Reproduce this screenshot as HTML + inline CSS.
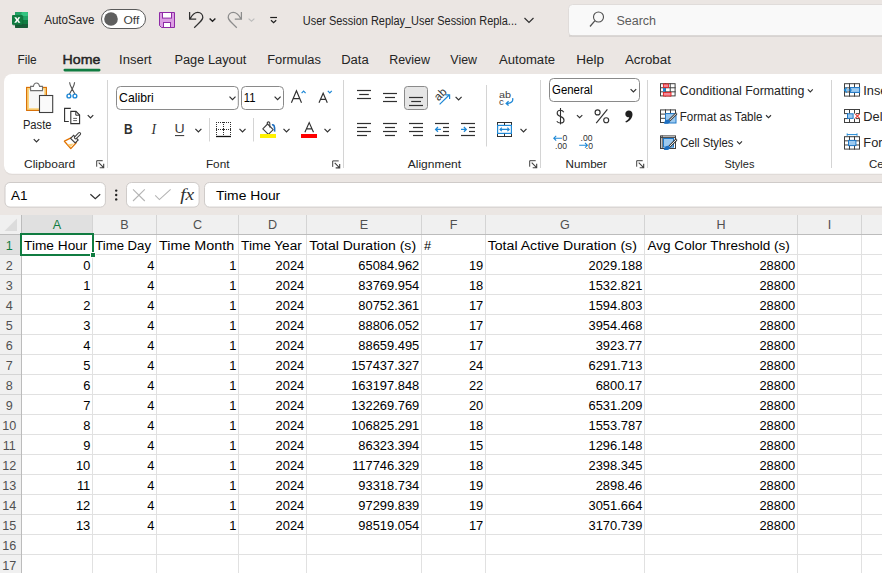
<!DOCTYPE html>
<html><head><meta charset="utf-8"><title>Excel</title>
<style>html,body{margin:0;padding:0;width:882px;height:573px;overflow:hidden;background:#ebe6e3}
svg{display:block} text{font-family:"Liberation Sans",sans-serif}</style></head>
<body><svg width="882" height="573" viewBox="0 0 882 573" shape-rendering="auto">
<rect x="0" y="0" width="882" height="573" rx="0" fill="#ebe6e3" />
<g>
<rect x="15" y="12" width="13" height="16" rx="1.2" fill="#185c37" />
<rect x="15" y="12" width="13" height="4.2" rx="1.2" fill="#21a366" />
<rect x="21.5" y="12" width="6.5" height="4.2" rx="1.2" fill="#33c481" />
<rect x="15" y="16" width="13" height="4" rx="0" fill="#21a366" />
<rect x="15" y="20" width="13" height="4" rx="0" fill="#107c41" />
<rect x="15" y="24" width="13" height="4" rx="1.2" fill="#185c37" />
<rect x="12.6" y="15.6" width="10.6" height="10" rx="1" fill="#0b4a26" opacity="0.5"/>
<rect x="12" y="15" width="10.6" height="9.8" rx="1" fill="#107c41" />
<path d="M14.3 17.2 L16.3 17.2 L17.3 19.1 L18.3 17.2 L20.3 17.2 L18.4 20 L20.4 22.8 L18.3 22.8 L17.3 20.9 L16.3 22.8 L14.2 22.8 L16.2 20 Z" fill="#fff" />
</g>
<text x="44.18" y="24" font-size="12.50" fill="#242424" textLength="50.24" lengthAdjust="spacingAndGlyphs">AutoSave</text>
<rect x="101.5" y="9.5" width="44" height="19" rx="9.5" fill="#fff" stroke="#5a5a5a" stroke-width="1" />
<circle cx="111" cy="19" r="6.8" fill="#5f5f5f"/>
<text x="123.44" y="23.8" font-size="11.05" fill="#3c3c3c" textLength="15.85" lengthAdjust="spacingAndGlyphs">Off</text>
<path d="M159.5 12.5 H174.5 V27.5 H161.5 L159.5 25.5 Z" fill="#dc9ee3" stroke="#8e2aa6" stroke-width="1" />
<rect x="162.5" y="12.5" width="9" height="5.6" rx="0" fill="#fff" stroke="#8e2aa6" stroke-width="1" />
<rect x="163.5" y="22.5" width="7" height="5" rx="0" fill="#fff" stroke="#8e2aa6" stroke-width="1" />
<path d="M189.6 12 V19 H196.2 M190.2 18.6 C192.5 14.2 195 12.4 197.8 12.4 C200.8 12.4 202.8 14.8 202.8 17.6 C202.8 19.6 201.5 21 194.2 27.8" fill="none" stroke="#303030" stroke-width="1.25" stroke-linejoin="miter"/>
<path d="M209.6 18.6 L212.5 21.2 L215.4 18.6" fill="none" stroke="#202020" stroke-width="1.4" />
<path d="M241.4 12 V19 H234.8 M240.8 18.6 C238.5 14.2 236 12.4 233.2 12.4 C230.2 12.4 228.2 14.8 228.2 17.6 C228.2 19.6 229.5 21 236.8 27.8" fill="none" stroke="#8c8c8c" stroke-width="1.25" />
<path d="M248.6 18.6 L251.5 21.2 L254.4 18.6" fill="none" stroke="#bdbdbd" stroke-width="1.2" />
<line x1="270.2" y1="17.5" x2="277" y2="17.5" stroke="#202020" stroke-width="1.2" />
<path d="M271 20.2 L273.6 22.7 L276.2 20.2" fill="none" stroke="#202020" stroke-width="1.2" />
<text x="302.76" y="25" font-size="13.08" fill="#242424" textLength="214.24" lengthAdjust="spacingAndGlyphs">User Session Replay_User Session Repla...</text>
<path d="M524.5 18 L529 22.5 L533.5 18" fill="none" stroke="#303030" stroke-width="1.2" />
<rect x="568.5" y="4.5" width="400" height="31.5" rx="4" fill="#f9f9f9" stroke="#e0dcda" stroke-width="1" />
<line x1="569" y1="36" x2="882" y2="36" stroke="#c9c5c3" stroke-width="1" />
<circle cx="598.5" cy="17" r="5" fill="none" stroke="#505050" stroke-width="1.1"/>
<line x1="594.8" y1="20.8" x2="590" y2="26.5" stroke="#505050" stroke-width="1.2" />
<text x="616.43" y="25" font-size="13.08" fill="#5c5c5c" textLength="39.58" lengthAdjust="spacingAndGlyphs">Search</text>
<text x="17.52" y="63.7" font-size="13.08" fill="#242424" textLength="19.21" lengthAdjust="spacingAndGlyphs">File</text>
<text x="62.54" y="63.7" font-size="13.08" fill="#242424" stroke="#242424" stroke-width="0.45" textLength="37.79" lengthAdjust="spacingAndGlyphs">Home</text>
<text x="119.10" y="63.7" font-size="13.08" fill="#242424" textLength="32.60" lengthAdjust="spacingAndGlyphs">Insert</text>
<text x="174.45" y="63.7" font-size="13.08" fill="#242424" textLength="71.94" lengthAdjust="spacingAndGlyphs">Page Layout</text>
<text x="267.24" y="63.7" font-size="13.08" fill="#242424" textLength="53.72" lengthAdjust="spacingAndGlyphs">Formulas</text>
<text x="341.23" y="63.7" font-size="13.08" fill="#242424" textLength="27.47" lengthAdjust="spacingAndGlyphs">Data</text>
<text x="389.18" y="63.7" font-size="13.08" fill="#242424" textLength="40.79" lengthAdjust="spacingAndGlyphs">Review</text>
<text x="450.35" y="63.7" font-size="13.08" fill="#242424" textLength="26.62" lengthAdjust="spacingAndGlyphs">View</text>
<text x="498.97" y="63.7" font-size="13.08" fill="#242424" textLength="56.11" lengthAdjust="spacingAndGlyphs">Automate</text>
<text x="576.19" y="63.7" font-size="13.08" fill="#242424" textLength="27.88" lengthAdjust="spacingAndGlyphs">Help</text>
<text x="624.97" y="63.7" font-size="13.08" fill="#242424" textLength="45.92" lengthAdjust="spacingAndGlyphs">Acrobat</text>
<rect x="63.5" y="68.8" width="37" height="2.6" rx="1.3" fill="#107c41" />
<rect x="4" y="75" width="890" height="100" rx="8" fill="#d8d3d0" opacity="0.6"/>
<rect x="4" y="74" width="890" height="99.8" rx="8" fill="#ffffff" />
<rect x="26.6" y="87.4" width="19.8" height="23" rx="0" fill="#fbd47c" stroke="#d86c00" stroke-width="1.1" />
<rect x="29" y="89.6" width="15.2" height="18.6" rx="0" fill="#f7f7f7" />
<path d="M30.6 90.6 V86.4 H33.4 C33.8 84 35 83 36.5 83 C38 83 39.2 84 39.6 86.4 H42.5 V90.6 Z" fill="#ffffff" stroke="#707070" stroke-width="1.1" />
<rect x="39.5" y="95.5" width="13.2" height="17" rx="0" fill="#fafafa" stroke="#404040" stroke-width="1.1" />
<text x="22.88" y="128.8" font-size="12.50" fill="#242424" textLength="28.62" lengthAdjust="spacingAndGlyphs">Paste</text>
<path d="M33.75 139.125 L36.5 141.875 L39.25 139.125" fill="none" stroke="#303030" stroke-width="1.2" />
<path d="M69.6 82.2 C69.8 85 71.5 87.5 72.2 89 L69.4 94.2 M74.6 82.2 C74.4 85 72.8 87.5 72.2 89 L75 94.2" fill="none" stroke="#505050" stroke-width="1.1" />
<circle cx="68.9" cy="96" r="1.9" fill="none" stroke="#1e88d6" stroke-width="1.4"/>
<circle cx="74.9" cy="96" r="1.9" fill="none" stroke="#1e88d6" stroke-width="1.4"/>
<path d="M68.8 121.5 H64.6 V108.4 H70.8" fill="none" stroke="#303030" stroke-width="1.1" />
<path d="M70.8 123.6 V111.4 H76 L79.6 115 V123.6 Z" fill="#ffffff" stroke="#303030" stroke-width="1.1" />
<path d="M75.8 111.4 V115.2 H79.6" fill="none" stroke="#303030" stroke-width="1" />
<line x1="73.2" y1="118.4" x2="77" y2="118.4" stroke="#505050" stroke-width="0.9" />
<line x1="73.2" y1="120.6" x2="77" y2="120.6" stroke="#505050" stroke-width="0.9" />
<path d="M87.75 115.125 L90.5 117.875 L93.25 115.125" fill="none" stroke="#303030" stroke-width="1.2" />
<path d="M64.4 141.2 L71.4 137.6 L76.2 142.8 L70.8 148.6 Z" fill="#ffffff" stroke="#e27300" stroke-width="1.3" stroke-linejoin="round"/>
<path d="M67.2 144.2 L73.8 143.6 L70.8 147 Z" fill="#fbd07a" />
<path d="M70.6 138.4 L73.6 135.4 L78.2 140 L75.2 143 Z" fill="#ffffff" stroke="#404040" stroke-width="1.1" />
<line x1="75.6" y1="137.6" x2="79.4" y2="133.8" stroke="#404040" stroke-width="3.4" stroke-linecap="round"/>
<line x1="75.6" y1="137.6" x2="79.4" y2="133.8" stroke="#ffffff" stroke-width="1.3" stroke-linecap="round"/>
<text x="23.99" y="167.7" font-size="11.48" fill="#242424" textLength="51.28" lengthAdjust="spacingAndGlyphs">Clipboard</text>
<path d="M96.7 166.7 V160.7 H102.7" fill="none" stroke="#404040" stroke-width="1" />
<path d="M98.7 162.7 L103.4 167.39999999999998 M103.7 163.7 V167.7 H99.7" fill="none" stroke="#404040" stroke-width="1.1" />
<line x1="107.5" y1="80" x2="107.5" y2="168" stroke="#d4d4d4" stroke-width="1" />
<rect x="116.5" y="86.5" width="121.8" height="23" rx="4" fill="#fff" stroke="#8a8a8a" stroke-width="1" />
<text x="119.08" y="102.2" font-size="12.94" fill="#000" textLength="34.64" lengthAdjust="spacingAndGlyphs">Calibri</text>
<path d="M229.5 96.7 L232.5 99.7 L235.5 96.7" fill="none" stroke="#303030" stroke-width="1.2" />
<rect x="241.5" y="86.5" width="42" height="23" rx="4" fill="#fff" stroke="#8a8a8a" stroke-width="1" />
<text x="243.80" y="102" font-size="12.21" fill="#000" textLength="11.72" lengthAdjust="spacingAndGlyphs">11</text>
<path d="M274.6 96.7 L277.6 99.7 L280.6 96.7" fill="none" stroke="#303030" stroke-width="1.2" />
<path d="M291.4 102.8 L296.45 90.8 L301.5 102.8 M293.1 98.6 H299.8" fill="none" stroke="#303030" stroke-width="1.15" />
<path d="M301.6 93.2 L303.6 91.2 L305.6 93.2" fill="none" stroke="#1e88d6" stroke-width="1.2" />
<path d="M319 102.8 L323.15 93.2 L327.3 102.8 M320.5 99.4 H325.8" fill="none" stroke="#303030" stroke-width="1.15" />
<path d="M327.8 90.8 L329.8 92.8 L331.8 90.8" fill="none" stroke="#1e88d6" stroke-width="1.2" />
<text x="123.90" y="133.8" font-size="13.81" fill="#303030" font-weight="bold" textLength="8.64" lengthAdjust="spacingAndGlyphs">B</text>
<text x="151.6" y="133.8" font-size="13.6" fill="#303030" font-style="italic" style="font-family:Liberation Serif">I</text>
<text x="174.41" y="133.2" font-size="13.08" fill="#404040" textLength="10.17" lengthAdjust="spacingAndGlyphs">U</text>
<line x1="175" y1="135.6" x2="184.2" y2="135.6" stroke="#303030" stroke-width="1" />
<path d="M195.4 128.9 L198.4 131.9 L201.4 128.9" fill="none" stroke="#303030" stroke-width="1.2" />
<line x1="209.5" y1="118" x2="209.5" y2="141.5" stroke="#d4d4d4" stroke-width="1" />
<g fill="#303030"><rect x="216" y="122" width="1" height="1"/><rect x="216" y="129" width="1" height="1"/><rect x="218" y="122" width="1" height="1"/><rect x="218" y="129" width="1" height="1"/><rect x="220" y="122" width="1" height="1"/><rect x="220" y="129" width="1" height="1"/><rect x="222" y="122" width="1" height="1"/><rect x="222" y="129" width="1" height="1"/><rect x="224" y="122" width="1" height="1"/><rect x="224" y="129" width="1" height="1"/><rect x="226" y="122" width="1" height="1"/><rect x="226" y="129" width="1" height="1"/><rect x="228" y="122" width="1" height="1"/><rect x="228" y="129" width="1" height="1"/><rect x="230" y="122" width="1" height="1"/><rect x="230" y="129" width="1" height="1"/><rect x="216" y="124" width="1" height="1"/><rect x="230" y="124" width="1" height="1"/><rect x="223" y="124" width="1" height="1"/><rect x="216" y="126" width="1" height="1"/><rect x="230" y="126" width="1" height="1"/><rect x="223" y="126" width="1" height="1"/><rect x="216" y="128" width="1" height="1"/><rect x="230" y="128" width="1" height="1"/><rect x="223" y="128" width="1" height="1"/><rect x="216" y="130" width="1" height="1"/><rect x="230" y="130" width="1" height="1"/><rect x="223" y="130" width="1" height="1"/><rect x="216" y="132" width="1" height="1"/><rect x="230" y="132" width="1" height="1"/><rect x="223" y="132" width="1" height="1"/><rect x="216" y="134" width="1" height="1"/><rect x="230" y="134" width="1" height="1"/><rect x="223" y="134" width="1" height="1"/><rect x="223" y="122" width="1" height="1"/><rect x="223" y="129" width="1" height="1"/></g>
<line x1="216" y1="136.5" x2="231" y2="136.5" stroke="#101010" stroke-width="1.3" />
<path d="M239.5 128.9 L242.5 131.9 L245.5 128.9" fill="none" stroke="#303030" stroke-width="1.2" />
<line x1="253.5" y1="118" x2="253.5" y2="141.5" stroke="#d4d4d4" stroke-width="1" />
<path d="M262.8 128.8 L267.6 124 L273.2 129.6 L268.4 134.4 Z" fill="#ffffff" stroke="#404040" stroke-width="1.1" stroke-linejoin="round"/>
<path d="M267.4 124.4 C266.6 121.6 269.8 120.8 269.8 123.6 V127.6" fill="none" stroke="#404040" stroke-width="1.1" />
<path d="M272 125 C274 124.2 275 126.6 274.6 131.6" fill="none" stroke="#1e6fc0" stroke-width="1.6" />
<rect x="260" y="134" width="16" height="4" rx="0" fill="#fff100" />
<path d="M283.5 128.9 L286.5 131.9 L289.5 128.9" fill="none" stroke="#303030" stroke-width="1.2" />
<path d="M304.9 132.2 L309.2 122.6 L313.5 132.2 M306.4 128.8 H312" fill="none" stroke="#303030" stroke-width="1.15" />
<rect x="301" y="134" width="16" height="4" rx="0" fill="#ff0000" />
<path d="M324.5 128.9 L327.5 131.9 L330.5 128.9" fill="none" stroke="#303030" stroke-width="1.2" />
<text x="205.93" y="167.8" font-size="11.48" fill="#242424" textLength="23.55" lengthAdjust="spacingAndGlyphs">Font</text>
<path d="M332.7 166.9 V160.9 H338.7" fill="none" stroke="#404040" stroke-width="1" />
<path d="M334.7 162.9 L339.4 167.6 M339.7 163.9 V167.9 H335.7" fill="none" stroke="#404040" stroke-width="1.1" />
<line x1="343.5" y1="80" x2="343.5" y2="168" stroke="#d4d4d4" stroke-width="1" />
<line x1="357" y1="90.5" x2="371" y2="90.5" stroke="#303030" stroke-width="1.2" stroke-linecap="butt"/>
<line x1="359.2" y1="94.5" x2="368.8" y2="94.5" stroke="#303030" stroke-width="1.2" stroke-linecap="butt"/>
<line x1="357" y1="98.5" x2="371" y2="98.5" stroke="#303030" stroke-width="1.2" stroke-linecap="butt"/>
<line x1="383" y1="93.5" x2="397" y2="93.5" stroke="#303030" stroke-width="1.2" stroke-linecap="butt"/>
<line x1="385" y1="97.5" x2="395" y2="97.5" stroke="#303030" stroke-width="1.2" stroke-linecap="butt"/>
<line x1="383" y1="101.5" x2="397" y2="101.5" stroke="#303030" stroke-width="1.2" stroke-linecap="butt"/>
<rect x="404.5" y="86.5" width="23" height="23" rx="3" fill="#e6e6e6" stroke="#8a8a8a" stroke-width="1" />
<line x1="409" y1="97.5" x2="423" y2="97.5" stroke="#303030" stroke-width="1.2" stroke-linecap="butt"/>
<line x1="411.2" y1="101.5" x2="421" y2="101.5" stroke="#303030" stroke-width="1.2" stroke-linecap="butt"/>
<line x1="409" y1="105.5" x2="423" y2="105.5" stroke="#303030" stroke-width="1.2" stroke-linecap="butt"/>
<text x="0" y="0" font-size="11.4" fill="#303030" transform="translate(438.4 101.6) rotate(-45)">ab</text>
<line x1="439.6" y1="104.4" x2="449.2" y2="95" stroke="#1e88d6" stroke-width="1.2" />
<path d="M445.4 94.8 H449.6 V99" fill="none" stroke="#1e88d6" stroke-width="1.2" />
<path d="M455.6 96.9 L458.6 99.9 L461.6 96.9" fill="none" stroke="#303030" stroke-width="1.2" />
<line x1="357" y1="123.5" x2="371" y2="123.5" stroke="#303030" stroke-width="1.2" stroke-linecap="butt"/>
<line x1="383" y1="123.5" x2="397" y2="123.5" stroke="#303030" stroke-width="1.2" stroke-linecap="butt"/>
<line x1="409" y1="123.5" x2="423" y2="123.5" stroke="#303030" stroke-width="1.2" stroke-linecap="butt"/>
<line x1="357" y1="127.5" x2="367" y2="127.5" stroke="#303030" stroke-width="1.2" stroke-linecap="butt"/>
<line x1="385" y1="127.5" x2="395" y2="127.5" stroke="#303030" stroke-width="1.2" stroke-linecap="butt"/>
<line x1="413" y1="127.5" x2="423" y2="127.5" stroke="#303030" stroke-width="1.2" stroke-linecap="butt"/>
<line x1="357" y1="131.5" x2="371" y2="131.5" stroke="#303030" stroke-width="1.2" stroke-linecap="butt"/>
<line x1="383" y1="131.5" x2="397" y2="131.5" stroke="#303030" stroke-width="1.2" stroke-linecap="butt"/>
<line x1="409" y1="131.5" x2="423" y2="131.5" stroke="#303030" stroke-width="1.2" stroke-linecap="butt"/>
<line x1="357" y1="135.5" x2="367" y2="135.5" stroke="#303030" stroke-width="1.2" stroke-linecap="butt"/>
<line x1="385" y1="135.5" x2="395" y2="135.5" stroke="#303030" stroke-width="1.2" stroke-linecap="butt"/>
<line x1="413" y1="135.5" x2="423" y2="135.5" stroke="#303030" stroke-width="1.2" stroke-linecap="butt"/>
<line x1="435" y1="123.5" x2="449" y2="123.5" stroke="#303030" stroke-width="1.2" stroke-linecap="butt"/>
<line x1="461" y1="123.5" x2="475" y2="123.5" stroke="#303030" stroke-width="1.2" stroke-linecap="butt"/>
<line x1="435" y1="135.5" x2="449" y2="135.5" stroke="#303030" stroke-width="1.2" stroke-linecap="butt"/>
<line x1="461" y1="135.5" x2="475" y2="135.5" stroke="#303030" stroke-width="1.2" stroke-linecap="butt"/>
<line x1="443" y1="127.5" x2="449" y2="127.5" stroke="#303030" stroke-width="1.2" stroke-linecap="butt"/>
<line x1="469" y1="127.5" x2="475" y2="127.5" stroke="#303030" stroke-width="1.2" stroke-linecap="butt"/>
<line x1="443" y1="131.5" x2="449" y2="131.5" stroke="#303030" stroke-width="1.2" stroke-linecap="butt"/>
<line x1="469" y1="131.5" x2="475" y2="131.5" stroke="#303030" stroke-width="1.2" stroke-linecap="butt"/>
<path d="M440.9 129.4 H435.6 M438 127 L435.6 129.4 L438 131.8" fill="none" stroke="#1e88d6" stroke-width="1.3" />
<path d="M461 129.4 H466.3 M463.9 127 L466.3 129.4 L463.9 131.8" fill="none" stroke="#1e88d6" stroke-width="1.3" />
<line x1="486.5" y1="85" x2="486.5" y2="146.5" stroke="#d4d4d4" stroke-width="1" />
<text x="499" y="97.6" font-size="9.6" fill="#404040" textLength="12" lengthAdjust="spacingAndGlyphs">ab</text>
<text x="499" y="104.8" font-size="9.6" fill="#404040">c</text>
<path d="M512.6 98.2 C513.4 101.2 511.2 103.4 506.4 103.4 M508.6 101.2 L506.2 103.4 L508.6 105.6" fill="none" stroke="#1e88d6" stroke-width="1.3" />
<rect x="497.5" y="122.5" width="14" height="14" rx="0" fill="#ffffff" stroke="#303030" stroke-width="1" />
<rect x="497.6" y="125.4" width="13.8" height="8" rx="0" fill="#ffffff" stroke="#1e88d6" stroke-width="1.2" />
<line x1="504.5" y1="122.5" x2="504.5" y2="125" stroke="#303030" stroke-width="1" />
<line x1="504.5" y1="133.8" x2="504.5" y2="136.5" stroke="#303030" stroke-width="1" />
<path d="M500 129.4 H509.2 M501.8 127.6 L500 129.4 L501.8 131.2 M507.4 127.6 L509.2 129.4 L507.4 131.2" fill="none" stroke="#1e88d6" stroke-width="1.1" />
<path d="M520.5 128.9 L523.5 131.9 L526.5 128.9" fill="none" stroke="#303030" stroke-width="1.2" />
<text x="407.78" y="167.8" font-size="11.48" fill="#242424" textLength="53.31" lengthAdjust="spacingAndGlyphs">Alignment</text>
<path d="M529.7 166.7 V160.7 H535.7" fill="none" stroke="#404040" stroke-width="1" />
<path d="M531.7 162.7 L536.4000000000001 167.39999999999998 M536.7 163.7 V167.7 H532.7" fill="none" stroke="#404040" stroke-width="1.1" />
<line x1="540.5" y1="80" x2="540.5" y2="168" stroke="#d4d4d4" stroke-width="1" />
<rect x="549.5" y="78.5" width="90" height="23" rx="4" fill="#fff" stroke="#8a8a8a" stroke-width="1" />
<text x="552.03" y="93.8" font-size="12.50" fill="#000" textLength="40.54" lengthAdjust="spacingAndGlyphs">General</text>
<path d="M630.6 89.19999999999999 L633.4 92.0 L636.1999999999999 89.19999999999999" fill="none" stroke="#303030" stroke-width="1.2" />
<path d="M563.8 112.2 C563 110.8 561.8 110.2 560.4 110.2 C558.4 110.2 557.2 111.4 557.2 113.2 C557.2 115.4 559.2 116 560.8 116.6 C562.8 117.4 564 118.2 564 120.2 C564 122 562.6 123 560.4 123 C558.8 123 557.6 122.4 556.8 121.2" fill="none" stroke="#303030" stroke-width="1.15" />
<line x1="560.5" y1="108" x2="560.5" y2="124.4" stroke="#303030" stroke-width="1.1" />
<path d="M576.9 115.05000000000001 L579.6 117.75 L582.3000000000001 115.05000000000001" fill="none" stroke="#303030" stroke-width="1.1" />
<circle cx="597.6" cy="112.4" r="2.5" fill="none" stroke="#303030" stroke-width="1.15"/>
<circle cx="606.2" cy="120.2" r="2.5" fill="none" stroke="#303030" stroke-width="1.15"/>
<line x1="607.4" y1="109.4" x2="596.2" y2="123.2" stroke="#303030" stroke-width="1.15" />
<path d="M628.8 110.4 C631 110.4 632.5 111.9 632.5 114.2 C632.5 117.8 630.2 120.8 626 122.6 L625.3 121.4 C627.6 120.2 629 118.8 629.3 117.3 C626.9 117.3 625.3 116 625.3 113.9 C625.3 111.8 626.8 110.4 628.8 110.4 Z" fill="#202020" />
<g font-size="8.6" fill="#303030">
<text x="562.6" y="140.8">0</text><text x="555" y="148.9">.00</text>
<text x="580.6" y="140.8">.00</text><text x="585.8" y="148.9">.0</text>
</g>
<path d="M562 138.2 H553.8 M556.2 135.8 L553.8 138.2 L556.2 140.6" fill="none" stroke="#1e88d6" stroke-width="1.1" />
<path d="M579.2 145.3 H587.4 M585 142.9 L587.4 145.3 L585 147.7" fill="none" stroke="#1e88d6" stroke-width="1.1" />
<text x="565.54" y="167.5" font-size="11.48" fill="#242424" textLength="41.45" lengthAdjust="spacingAndGlyphs">Number</text>
<path d="M636.7 166.7 V160.7 H642.7" fill="none" stroke="#404040" stroke-width="1" />
<path d="M638.7 162.7 L643.4000000000001 167.39999999999998 M643.7 163.7 V167.7 H639.7" fill="none" stroke="#404040" stroke-width="1.1" />
<line x1="647.5" y1="80" x2="647.5" y2="168" stroke="#d4d4d4" stroke-width="1" />
<g fill="none" stroke="#404040" stroke-width="1">
<rect x="660.5" y="83.7" width="14.6" height="12.2"/>
<line x1="665.37" y1="83.2" x2="665.37" y2="96.4"/>
<line x1="670.23" y1="83.2" x2="670.23" y2="96.4"/>
<line x1="660" y1="87.77" x2="675.6" y2="87.77"/>
<line x1="660" y1="91.83" x2="675.6" y2="91.83"/>
</g>
<rect x="663.4" y="84" width="5" height="3.4" rx="0" fill="#f38a9a" stroke="#e02020" stroke-width="0.9" />
<rect x="663.4" y="92.4" width="7.6" height="3.6" rx="0" fill="#f38a9a" stroke="#e02020" stroke-width="0.9" />
<rect x="663" y="88" width="2.6" height="3.6" rx="0" fill="#1e88d6" />
<text x="679.87" y="95" font-size="12.79" fill="#242424" textLength="124.53" lengthAdjust="spacingAndGlyphs">Conditional Formatting</text>
<path d="M807.8 89.45 L810.3 91.95 L812.8 89.45" fill="none" stroke="#303030" stroke-width="1.1" />
<g fill="none" stroke="#404040" stroke-width="1">
<rect x="660.5" y="109.9" width="15" height="12.6"/>
<line x1="665.50" y1="109.4" x2="665.50" y2="123.0"/>
<line x1="670.50" y1="109.4" x2="670.50" y2="123.0"/>
<line x1="660" y1="114.10" x2="676" y2="114.10"/>
<line x1="660" y1="118.30" x2="676" y2="118.30"/>
</g>
<rect x="665.5" y="113.6" width="10.5" height="9.4" rx="0" fill="#9dcaf0" stroke="#1e78c8" stroke-width="1" />
<line x1="669.6" y1="120.2" x2="676" y2="113.8" stroke="#404040" stroke-width="2.6" stroke-linecap="round"/>
<line x1="669.6" y1="120.2" x2="676" y2="113.8" stroke="#ffffff" stroke-width="0.9" stroke-linecap="round"/>
<path d="M663.8 123.6 C664.2 121.2 666.2 119.4 668.6 119.6 L670.2 121.2 C670 123.2 667.4 124.2 663.8 123.6 Z" fill="#1e6fc0" />
<text x="679.77" y="120.8" font-size="12.79" fill="#242424" textLength="82.74" lengthAdjust="spacingAndGlyphs">Format as Table</text>
<path d="M766.0 115.25 L768.5 117.75 L771.0 115.25" fill="none" stroke="#303030" stroke-width="1.1" />
<g fill="none" stroke="#404040" stroke-width="1">
<rect x="660.5" y="135.9" width="15" height="12.6"/>
</g>
<line x1="660" y1="137.6" x2="676" y2="137.6" stroke="#404040" stroke-width="1" />
<line x1="662.2" y1="135.4" x2="662.2" y2="149" stroke="#404040" stroke-width="1" />
<rect x="663.5" y="138.5" width="10" height="8.6" rx="0" fill="#9dcaf0" stroke="#1e78c8" stroke-width="1" />
<line x1="669.6" y1="146.4" x2="676" y2="140" stroke="#404040" stroke-width="2.6" stroke-linecap="round"/>
<line x1="669.6" y1="146.4" x2="676" y2="140" stroke="#ffffff" stroke-width="0.9" stroke-linecap="round"/>
<path d="M663.8 149.8 C664.2 147.4 666.2 145.6 668.6 145.8 L670.2 147.4 C670 149.4 667.4 150.4 663.8 149.8 Z" fill="#1e6fc0" />
<text x="680.13" y="146.8" font-size="12.79" fill="#242424" textLength="53.28" lengthAdjust="spacingAndGlyphs">Cell Styles</text>
<path d="M737.0 141.35 L739.5 143.85 L742.0 141.35" fill="none" stroke="#303030" stroke-width="1.1" />
<text x="724.50" y="167.7" font-size="11.48" fill="#242424" textLength="29.90" lengthAdjust="spacingAndGlyphs">Styles</text>
<line x1="831.5" y1="80" x2="831.5" y2="168" stroke="#d4d4d4" stroke-width="1" />
<g fill="none" stroke="#404040" stroke-width="1">
<rect x="844.5" y="83.7" width="15" height="12.4"/>
<line x1="849.50" y1="83.2" x2="849.50" y2="96.60000000000001"/>
<line x1="854.50" y1="83.2" x2="854.50" y2="96.60000000000001"/>
<line x1="844" y1="87.83" x2="860" y2="87.83"/>
<line x1="844" y1="91.97" x2="860" y2="91.97"/>
</g>
<rect x="850.4" y="87.6" width="9.2" height="4.8" rx="0" fill="#9dcaf0" stroke="#1e78c8" stroke-width="1" />
<path d="M852 90 H844.6 M847 87.4 L844.4 90 L847 92.6" fill="none" stroke="#1e88d6" stroke-width="1.2" />
<text x="863.22" y="95" font-size="12.79" fill="#242424" textLength="24.18" lengthAdjust="spacingAndGlyphs">Inse</text>
<g fill="none" stroke="#404040" stroke-width="1">
<path d="M844 109.5 H860 M844 122.5 H860 M844.5 109 V113.6 M844.5 118.6 V123 M859.5 109 V113.6 M859.5 118.6 V123 M849.5 109 V113.6 M854.5 109 V113.6 M849.5 118.6 V123 M854.5 118.6 V123 M844 113.6 H848 M844 118.6 H848 M856 113.6 H860 M856 118.6 H860"/>
</g>
<rect x="847.5" y="113.8" width="5.6" height="4.6" rx="0" fill="#9dcaf0" stroke="#1e78c8" stroke-width="1" />
<path d="M855.2 113.8 L859.6 118.4 M859.6 113.8 L855.2 118.4" fill="none" stroke="#e8403a" stroke-width="1.1" />
<text x="863.35" y="120.8" font-size="12.79" fill="#242424" textLength="19.19" lengthAdjust="spacingAndGlyphs">Del</text>
<g fill="none" stroke="#404040" stroke-width="1">
<rect x="844.5" y="136.7" width="15" height="12.4"/>
<line x1="849.50" y1="136.2" x2="849.50" y2="149.6"/>
<line x1="854.50" y1="136.2" x2="854.50" y2="149.6"/>
<line x1="844" y1="140.83" x2="860" y2="140.83"/>
<line x1="844" y1="144.97" x2="860" y2="144.97"/>
</g>
<rect x="848.5" y="140.4" width="7.4" height="5.2" rx="0" fill="#9dcaf0" stroke="#1e78c8" stroke-width="1" />
<path d="M847.2 134.6 H857 M847.2 133.4 V135.8 M857 133.4 V135.8" fill="none" stroke="#1e88d6" stroke-width="1" />
<text x="863.35" y="146.8" font-size="12.79" fill="#242424" textLength="19.19" lengthAdjust="spacingAndGlyphs">For</text>
<text x="868.92" y="167.7" font-size="11.48" fill="#242424" textLength="14.68" lengthAdjust="spacingAndGlyphs">Ce</text>
<rect x="5" y="182.5" width="100.4" height="24.6" rx="5" fill="#ffffff" stroke="#cfcbc9" stroke-width="1" />
<text x="10.97" y="200.3" font-size="13.08" fill="#000" textLength="16.48" lengthAdjust="spacingAndGlyphs">A1</text>
<path d="M90.4 194.2 L95.3 198.8 L100.2 194.2" fill="none" stroke="#303030" stroke-width="1.2" />
<circle cx="116.2" cy="190.6" r="1.2" fill="#242424"/><circle cx="116.2" cy="195" r="1.2" fill="#242424"/><circle cx="116.2" cy="199.4" r="1.2" fill="#242424"/>
<rect x="126.5" y="182.5" width="72.6" height="24.6" rx="5" fill="#ffffff" stroke="#cfcbc9" stroke-width="1" />
<path d="M133 189.4 L144.8 201 M144.8 189.4 L133 201" fill="none" stroke="#b4b4b4" stroke-width="1.1" />
<path d="M155.2 195.4 L159.4 199.6 L170.6 189.4" fill="none" stroke="#b4b4b4" stroke-width="1.1" />
<text x="180.2" y="200.4" font-size="16" font-style="italic" fill="#303030" style="font-family:Liberation Serif" textLength="14" lengthAdjust="spacingAndGlyphs">fx</text>
<rect x="204.5" y="182.5" width="700" height="24.6" rx="5" fill="#ffffff" stroke="#cfcbc9" stroke-width="1" />
<text x="216.09" y="199.7" font-size="13.08" fill="#000" textLength="64.14" lengthAdjust="spacingAndGlyphs">Time Hour</text>
<rect x="0" y="215" width="882" height="358" rx="0" fill="#ffffff" />
<rect x="0" y="215" width="882" height="19" rx="0" fill="#f0f0f0" />
<rect x="0" y="215" width="21" height="358" rx="0" fill="#f0f0f0" />
<rect x="22" y="215" width="70" height="19" rx="0" fill="#e0e0e0" />
<rect x="0" y="235" width="21" height="19" rx="0" fill="#e0e0e0" />
<line x1="22" y1="254.5" x2="882" y2="254.5" stroke="#e1e1e1" stroke-width="1" />
<line x1="0" y1="254.5" x2="21" y2="254.5" stroke="#d4d4d4" stroke-width="1" />
<line x1="22" y1="274.5" x2="882" y2="274.5" stroke="#e1e1e1" stroke-width="1" />
<line x1="0" y1="274.5" x2="21" y2="274.5" stroke="#d4d4d4" stroke-width="1" />
<line x1="22" y1="294.5" x2="882" y2="294.5" stroke="#e1e1e1" stroke-width="1" />
<line x1="0" y1="294.5" x2="21" y2="294.5" stroke="#d4d4d4" stroke-width="1" />
<line x1="22" y1="314.5" x2="882" y2="314.5" stroke="#e1e1e1" stroke-width="1" />
<line x1="0" y1="314.5" x2="21" y2="314.5" stroke="#d4d4d4" stroke-width="1" />
<line x1="22" y1="334.5" x2="882" y2="334.5" stroke="#e1e1e1" stroke-width="1" />
<line x1="0" y1="334.5" x2="21" y2="334.5" stroke="#d4d4d4" stroke-width="1" />
<line x1="22" y1="354.5" x2="882" y2="354.5" stroke="#e1e1e1" stroke-width="1" />
<line x1="0" y1="354.5" x2="21" y2="354.5" stroke="#d4d4d4" stroke-width="1" />
<line x1="22" y1="374.5" x2="882" y2="374.5" stroke="#e1e1e1" stroke-width="1" />
<line x1="0" y1="374.5" x2="21" y2="374.5" stroke="#d4d4d4" stroke-width="1" />
<line x1="22" y1="394.5" x2="882" y2="394.5" stroke="#e1e1e1" stroke-width="1" />
<line x1="0" y1="394.5" x2="21" y2="394.5" stroke="#d4d4d4" stroke-width="1" />
<line x1="22" y1="414.5" x2="882" y2="414.5" stroke="#e1e1e1" stroke-width="1" />
<line x1="0" y1="414.5" x2="21" y2="414.5" stroke="#d4d4d4" stroke-width="1" />
<line x1="22" y1="434.5" x2="882" y2="434.5" stroke="#e1e1e1" stroke-width="1" />
<line x1="0" y1="434.5" x2="21" y2="434.5" stroke="#d4d4d4" stroke-width="1" />
<line x1="22" y1="454.5" x2="882" y2="454.5" stroke="#e1e1e1" stroke-width="1" />
<line x1="0" y1="454.5" x2="21" y2="454.5" stroke="#d4d4d4" stroke-width="1" />
<line x1="22" y1="474.5" x2="882" y2="474.5" stroke="#e1e1e1" stroke-width="1" />
<line x1="0" y1="474.5" x2="21" y2="474.5" stroke="#d4d4d4" stroke-width="1" />
<line x1="22" y1="494.5" x2="882" y2="494.5" stroke="#e1e1e1" stroke-width="1" />
<line x1="0" y1="494.5" x2="21" y2="494.5" stroke="#d4d4d4" stroke-width="1" />
<line x1="22" y1="514.5" x2="882" y2="514.5" stroke="#e1e1e1" stroke-width="1" />
<line x1="0" y1="514.5" x2="21" y2="514.5" stroke="#d4d4d4" stroke-width="1" />
<line x1="22" y1="534.5" x2="882" y2="534.5" stroke="#e1e1e1" stroke-width="1" />
<line x1="0" y1="534.5" x2="21" y2="534.5" stroke="#d4d4d4" stroke-width="1" />
<line x1="22" y1="554.5" x2="882" y2="554.5" stroke="#e1e1e1" stroke-width="1" />
<line x1="0" y1="554.5" x2="21" y2="554.5" stroke="#d4d4d4" stroke-width="1" />
<line x1="22" y1="574.5" x2="882" y2="574.5" stroke="#e1e1e1" stroke-width="1" />
<line x1="0" y1="574.5" x2="21" y2="574.5" stroke="#d4d4d4" stroke-width="1" />
<line x1="92.5" y1="235" x2="92.5" y2="573" stroke="#e1e1e1" stroke-width="1" />
<line x1="92.5" y1="215" x2="92.5" y2="234" stroke="#d4d4d4" stroke-width="1" />
<line x1="156.5" y1="235" x2="156.5" y2="573" stroke="#e1e1e1" stroke-width="1" />
<line x1="156.5" y1="215" x2="156.5" y2="234" stroke="#d4d4d4" stroke-width="1" />
<line x1="238.5" y1="235" x2="238.5" y2="573" stroke="#e1e1e1" stroke-width="1" />
<line x1="238.5" y1="215" x2="238.5" y2="234" stroke="#d4d4d4" stroke-width="1" />
<line x1="306.5" y1="235" x2="306.5" y2="573" stroke="#e1e1e1" stroke-width="1" />
<line x1="306.5" y1="215" x2="306.5" y2="234" stroke="#d4d4d4" stroke-width="1" />
<line x1="421.5" y1="235" x2="421.5" y2="573" stroke="#e1e1e1" stroke-width="1" />
<line x1="421.5" y1="215" x2="421.5" y2="234" stroke="#d4d4d4" stroke-width="1" />
<line x1="485.5" y1="235" x2="485.5" y2="573" stroke="#e1e1e1" stroke-width="1" />
<line x1="485.5" y1="215" x2="485.5" y2="234" stroke="#d4d4d4" stroke-width="1" />
<line x1="644.5" y1="235" x2="644.5" y2="573" stroke="#e1e1e1" stroke-width="1" />
<line x1="644.5" y1="215" x2="644.5" y2="234" stroke="#d4d4d4" stroke-width="1" />
<line x1="797.5" y1="235" x2="797.5" y2="573" stroke="#e1e1e1" stroke-width="1" />
<line x1="797.5" y1="215" x2="797.5" y2="234" stroke="#d4d4d4" stroke-width="1" />
<line x1="861.5" y1="235" x2="861.5" y2="573" stroke="#e1e1e1" stroke-width="1" />
<line x1="861.5" y1="215" x2="861.5" y2="234" stroke="#d4d4d4" stroke-width="1" />
<line x1="21.5" y1="215" x2="21.5" y2="573" stroke="#bcbcbc" stroke-width="1" />
<line x1="0" y1="234.5" x2="882" y2="234.5" stroke="#bcbcbc" stroke-width="1" />
<path d="M17 218.5 V231 H4.5 Z" fill="#dcdcdc" />
<text x="57.0" y="229" font-size="12.6" fill="#107c41" text-anchor="middle">A</text>
<text x="124.5" y="229" font-size="12.6" fill="#505050" text-anchor="middle">B</text>
<text x="197.5" y="229" font-size="12.6" fill="#505050" text-anchor="middle">C</text>
<text x="272.5" y="229" font-size="12.6" fill="#505050" text-anchor="middle">D</text>
<text x="364.0" y="229" font-size="12.6" fill="#505050" text-anchor="middle">E</text>
<text x="453.5" y="229" font-size="12.6" fill="#505050" text-anchor="middle">F</text>
<text x="565.0" y="229" font-size="12.6" fill="#505050" text-anchor="middle">G</text>
<text x="721.0" y="229" font-size="12.6" fill="#505050" text-anchor="middle">H</text>
<text x="829.5" y="229" font-size="12.6" fill="#505050" text-anchor="middle">I</text>
<text x="9.2" y="249.5" font-size="12.6" fill="#107c41" text-anchor="middle">1</text>
<text x="9.2" y="269.5" font-size="12.6" fill="#505050" text-anchor="middle">2</text>
<text x="9.2" y="289.5" font-size="12.6" fill="#505050" text-anchor="middle">3</text>
<text x="9.2" y="309.5" font-size="12.6" fill="#505050" text-anchor="middle">4</text>
<text x="9.2" y="329.5" font-size="12.6" fill="#505050" text-anchor="middle">5</text>
<text x="9.2" y="349.5" font-size="12.6" fill="#505050" text-anchor="middle">6</text>
<text x="9.2" y="369.5" font-size="12.6" fill="#505050" text-anchor="middle">7</text>
<text x="9.2" y="389.5" font-size="12.6" fill="#505050" text-anchor="middle">8</text>
<text x="9.2" y="409.5" font-size="12.6" fill="#505050" text-anchor="middle">9</text>
<text x="9.2" y="429.5" font-size="12.6" fill="#505050" text-anchor="middle">10</text>
<text x="9.2" y="449.5" font-size="12.6" fill="#505050" text-anchor="middle">11</text>
<text x="9.2" y="469.5" font-size="12.6" fill="#505050" text-anchor="middle">12</text>
<text x="9.2" y="489.5" font-size="12.6" fill="#505050" text-anchor="middle">13</text>
<text x="9.2" y="509.5" font-size="12.6" fill="#505050" text-anchor="middle">14</text>
<text x="9.2" y="529.5" font-size="12.6" fill="#505050" text-anchor="middle">15</text>
<text x="9.2" y="549.5" font-size="12.6" fill="#505050" text-anchor="middle">16</text>
<text x="9.2" y="569.5" font-size="12.6" fill="#505050" text-anchor="middle">17</text>
<text x="24.10" y="250" font-size="13.08" fill="#000" textLength="63.33" lengthAdjust="spacingAndGlyphs">Time Hour</text>
<text x="95.21" y="250" font-size="13.08" fill="#000" textLength="55.82" lengthAdjust="spacingAndGlyphs">Time Day</text>
<text x="158.98" y="250" font-size="13.08" fill="#000" textLength="75.35" lengthAdjust="spacingAndGlyphs">Time Month</text>
<text x="241.10" y="250" font-size="13.08" fill="#000" textLength="60.61" lengthAdjust="spacingAndGlyphs">Time Year</text>
<text x="309.19" y="250" font-size="13.08" fill="#000" textLength="106.87" lengthAdjust="spacingAndGlyphs">Total Duration (s)</text>
<text x="423.94" y="250" font-size="13.08" fill="#000" textLength="7.12" lengthAdjust="spacingAndGlyphs">#</text>
<text x="487.69" y="250" font-size="13.08" fill="#000" textLength="149.17" lengthAdjust="spacingAndGlyphs">Total Active Duration (s)</text>
<text x="647.57" y="250" font-size="13.08" fill="#000" textLength="142.26" lengthAdjust="spacingAndGlyphs">Avg Color Threshold (s)</text>
<text x="90.3" y="270" font-size="12.9" fill="#000" text-anchor="end">0</text>
<text x="154.3" y="270" font-size="12.9" fill="#000" text-anchor="end">4</text>
<text x="236.3" y="270" font-size="12.9" fill="#000" text-anchor="end">1</text>
<text x="304.3" y="270" font-size="12.9" fill="#000" text-anchor="end">2024</text>
<text x="419.3" y="270" font-size="12.9" fill="#000" text-anchor="end">65084.962</text>
<text x="483.3" y="270" font-size="12.9" fill="#000" text-anchor="end">19</text>
<text x="642.3" y="270" font-size="12.9" fill="#000" text-anchor="end">2029.188</text>
<text x="795.3" y="270" font-size="12.9" fill="#000" text-anchor="end">28800</text>
<text x="90.3" y="290" font-size="12.9" fill="#000" text-anchor="end">1</text>
<text x="154.3" y="290" font-size="12.9" fill="#000" text-anchor="end">4</text>
<text x="236.3" y="290" font-size="12.9" fill="#000" text-anchor="end">1</text>
<text x="304.3" y="290" font-size="12.9" fill="#000" text-anchor="end">2024</text>
<text x="419.3" y="290" font-size="12.9" fill="#000" text-anchor="end">83769.954</text>
<text x="483.3" y="290" font-size="12.9" fill="#000" text-anchor="end">18</text>
<text x="642.3" y="290" font-size="12.9" fill="#000" text-anchor="end">1532.821</text>
<text x="795.3" y="290" font-size="12.9" fill="#000" text-anchor="end">28800</text>
<text x="90.3" y="310" font-size="12.9" fill="#000" text-anchor="end">2</text>
<text x="154.3" y="310" font-size="12.9" fill="#000" text-anchor="end">4</text>
<text x="236.3" y="310" font-size="12.9" fill="#000" text-anchor="end">1</text>
<text x="304.3" y="310" font-size="12.9" fill="#000" text-anchor="end">2024</text>
<text x="419.3" y="310" font-size="12.9" fill="#000" text-anchor="end">80752.361</text>
<text x="483.3" y="310" font-size="12.9" fill="#000" text-anchor="end">17</text>
<text x="642.3" y="310" font-size="12.9" fill="#000" text-anchor="end">1594.803</text>
<text x="795.3" y="310" font-size="12.9" fill="#000" text-anchor="end">28800</text>
<text x="90.3" y="330" font-size="12.9" fill="#000" text-anchor="end">3</text>
<text x="154.3" y="330" font-size="12.9" fill="#000" text-anchor="end">4</text>
<text x="236.3" y="330" font-size="12.9" fill="#000" text-anchor="end">1</text>
<text x="304.3" y="330" font-size="12.9" fill="#000" text-anchor="end">2024</text>
<text x="419.3" y="330" font-size="12.9" fill="#000" text-anchor="end">88806.052</text>
<text x="483.3" y="330" font-size="12.9" fill="#000" text-anchor="end">17</text>
<text x="642.3" y="330" font-size="12.9" fill="#000" text-anchor="end">3954.468</text>
<text x="795.3" y="330" font-size="12.9" fill="#000" text-anchor="end">28800</text>
<text x="90.3" y="350" font-size="12.9" fill="#000" text-anchor="end">4</text>
<text x="154.3" y="350" font-size="12.9" fill="#000" text-anchor="end">4</text>
<text x="236.3" y="350" font-size="12.9" fill="#000" text-anchor="end">1</text>
<text x="304.3" y="350" font-size="12.9" fill="#000" text-anchor="end">2024</text>
<text x="419.3" y="350" font-size="12.9" fill="#000" text-anchor="end">88659.495</text>
<text x="483.3" y="350" font-size="12.9" fill="#000" text-anchor="end">17</text>
<text x="642.3" y="350" font-size="12.9" fill="#000" text-anchor="end">3923.77</text>
<text x="795.3" y="350" font-size="12.9" fill="#000" text-anchor="end">28800</text>
<text x="90.3" y="370" font-size="12.9" fill="#000" text-anchor="end">5</text>
<text x="154.3" y="370" font-size="12.9" fill="#000" text-anchor="end">4</text>
<text x="236.3" y="370" font-size="12.9" fill="#000" text-anchor="end">1</text>
<text x="304.3" y="370" font-size="12.9" fill="#000" text-anchor="end">2024</text>
<text x="419.3" y="370" font-size="12.9" fill="#000" text-anchor="end">157437.327</text>
<text x="483.3" y="370" font-size="12.9" fill="#000" text-anchor="end">24</text>
<text x="642.3" y="370" font-size="12.9" fill="#000" text-anchor="end">6291.713</text>
<text x="795.3" y="370" font-size="12.9" fill="#000" text-anchor="end">28800</text>
<text x="90.3" y="390" font-size="12.9" fill="#000" text-anchor="end">6</text>
<text x="154.3" y="390" font-size="12.9" fill="#000" text-anchor="end">4</text>
<text x="236.3" y="390" font-size="12.9" fill="#000" text-anchor="end">1</text>
<text x="304.3" y="390" font-size="12.9" fill="#000" text-anchor="end">2024</text>
<text x="419.3" y="390" font-size="12.9" fill="#000" text-anchor="end">163197.848</text>
<text x="483.3" y="390" font-size="12.9" fill="#000" text-anchor="end">22</text>
<text x="642.3" y="390" font-size="12.9" fill="#000" text-anchor="end">6800.17</text>
<text x="795.3" y="390" font-size="12.9" fill="#000" text-anchor="end">28800</text>
<text x="90.3" y="410" font-size="12.9" fill="#000" text-anchor="end">7</text>
<text x="154.3" y="410" font-size="12.9" fill="#000" text-anchor="end">4</text>
<text x="236.3" y="410" font-size="12.9" fill="#000" text-anchor="end">1</text>
<text x="304.3" y="410" font-size="12.9" fill="#000" text-anchor="end">2024</text>
<text x="419.3" y="410" font-size="12.9" fill="#000" text-anchor="end">132269.769</text>
<text x="483.3" y="410" font-size="12.9" fill="#000" text-anchor="end">20</text>
<text x="642.3" y="410" font-size="12.9" fill="#000" text-anchor="end">6531.209</text>
<text x="795.3" y="410" font-size="12.9" fill="#000" text-anchor="end">28800</text>
<text x="90.3" y="430" font-size="12.9" fill="#000" text-anchor="end">8</text>
<text x="154.3" y="430" font-size="12.9" fill="#000" text-anchor="end">4</text>
<text x="236.3" y="430" font-size="12.9" fill="#000" text-anchor="end">1</text>
<text x="304.3" y="430" font-size="12.9" fill="#000" text-anchor="end">2024</text>
<text x="419.3" y="430" font-size="12.9" fill="#000" text-anchor="end">106825.291</text>
<text x="483.3" y="430" font-size="12.9" fill="#000" text-anchor="end">18</text>
<text x="642.3" y="430" font-size="12.9" fill="#000" text-anchor="end">1553.787</text>
<text x="795.3" y="430" font-size="12.9" fill="#000" text-anchor="end">28800</text>
<text x="90.3" y="450" font-size="12.9" fill="#000" text-anchor="end">9</text>
<text x="154.3" y="450" font-size="12.9" fill="#000" text-anchor="end">4</text>
<text x="236.3" y="450" font-size="12.9" fill="#000" text-anchor="end">1</text>
<text x="304.3" y="450" font-size="12.9" fill="#000" text-anchor="end">2024</text>
<text x="419.3" y="450" font-size="12.9" fill="#000" text-anchor="end">86323.394</text>
<text x="483.3" y="450" font-size="12.9" fill="#000" text-anchor="end">15</text>
<text x="642.3" y="450" font-size="12.9" fill="#000" text-anchor="end">1296.148</text>
<text x="795.3" y="450" font-size="12.9" fill="#000" text-anchor="end">28800</text>
<text x="90.3" y="470" font-size="12.9" fill="#000" text-anchor="end">10</text>
<text x="154.3" y="470" font-size="12.9" fill="#000" text-anchor="end">4</text>
<text x="236.3" y="470" font-size="12.9" fill="#000" text-anchor="end">1</text>
<text x="304.3" y="470" font-size="12.9" fill="#000" text-anchor="end">2024</text>
<text x="419.3" y="470" font-size="12.9" fill="#000" text-anchor="end">117746.329</text>
<text x="483.3" y="470" font-size="12.9" fill="#000" text-anchor="end">18</text>
<text x="642.3" y="470" font-size="12.9" fill="#000" text-anchor="end">2398.345</text>
<text x="795.3" y="470" font-size="12.9" fill="#000" text-anchor="end">28800</text>
<text x="90.3" y="490" font-size="12.9" fill="#000" text-anchor="end">11</text>
<text x="154.3" y="490" font-size="12.9" fill="#000" text-anchor="end">4</text>
<text x="236.3" y="490" font-size="12.9" fill="#000" text-anchor="end">1</text>
<text x="304.3" y="490" font-size="12.9" fill="#000" text-anchor="end">2024</text>
<text x="419.3" y="490" font-size="12.9" fill="#000" text-anchor="end">93318.734</text>
<text x="483.3" y="490" font-size="12.9" fill="#000" text-anchor="end">19</text>
<text x="642.3" y="490" font-size="12.9" fill="#000" text-anchor="end">2898.46</text>
<text x="795.3" y="490" font-size="12.9" fill="#000" text-anchor="end">28800</text>
<text x="90.3" y="510" font-size="12.9" fill="#000" text-anchor="end">12</text>
<text x="154.3" y="510" font-size="12.9" fill="#000" text-anchor="end">4</text>
<text x="236.3" y="510" font-size="12.9" fill="#000" text-anchor="end">1</text>
<text x="304.3" y="510" font-size="12.9" fill="#000" text-anchor="end">2024</text>
<text x="419.3" y="510" font-size="12.9" fill="#000" text-anchor="end">97299.839</text>
<text x="483.3" y="510" font-size="12.9" fill="#000" text-anchor="end">19</text>
<text x="642.3" y="510" font-size="12.9" fill="#000" text-anchor="end">3051.664</text>
<text x="795.3" y="510" font-size="12.9" fill="#000" text-anchor="end">28800</text>
<text x="90.3" y="530" font-size="12.9" fill="#000" text-anchor="end">13</text>
<text x="154.3" y="530" font-size="12.9" fill="#000" text-anchor="end">4</text>
<text x="236.3" y="530" font-size="12.9" fill="#000" text-anchor="end">1</text>
<text x="304.3" y="530" font-size="12.9" fill="#000" text-anchor="end">2024</text>
<text x="419.3" y="530" font-size="12.9" fill="#000" text-anchor="end">98519.054</text>
<text x="483.3" y="530" font-size="12.9" fill="#000" text-anchor="end">17</text>
<text x="642.3" y="530" font-size="12.9" fill="#000" text-anchor="end">3170.739</text>
<text x="795.3" y="530" font-size="12.9" fill="#000" text-anchor="end">28800</text>
<rect x="21" y="234" width="72" height="21" rx="0" fill="none" stroke="#107c41" stroke-width="2" />
<rect x="90.5" y="252.5" width="5" height="5" rx="0" fill="#107c41" stroke="#ffffff" stroke-width="1" />
</svg></body></html>
